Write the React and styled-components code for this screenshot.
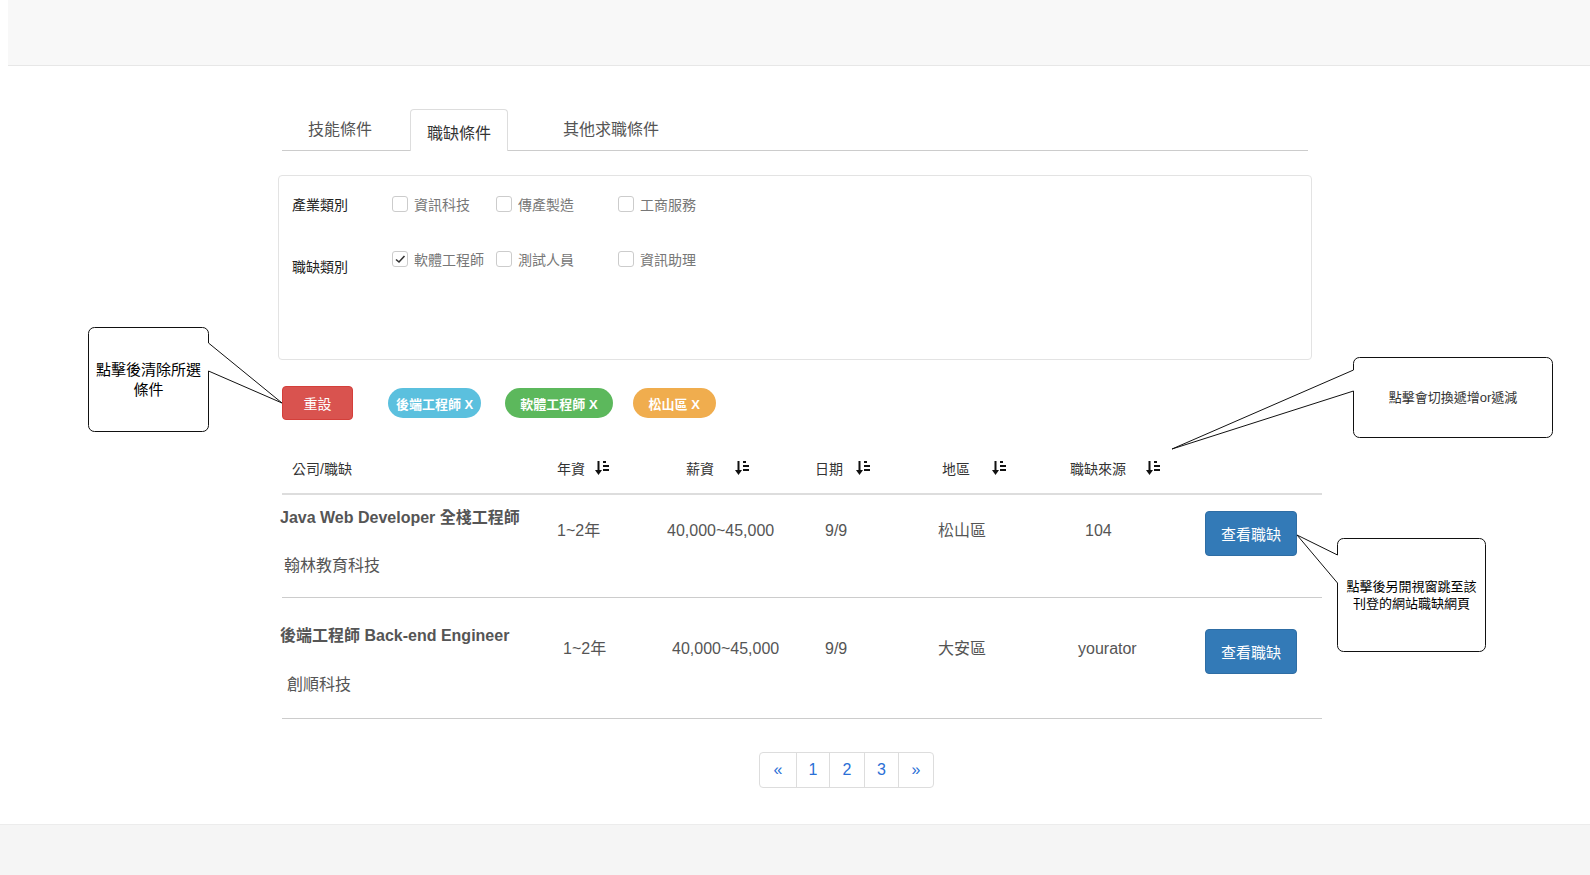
import React from "react";
import styled, { createGlobalStyle } from "styled-components";

const GlobalStyle = createGlobalStyle`
  html, body {
    margin: 0;
    padding: 0;
    background: #fff;
  }
  body {
    font-family: "Liberation Sans", "Noto Sans CJK TC", sans-serif;
    color: #333;
  }
  * {
    box-sizing: border-box;
  }
`;

const Page = styled.div`
  position: relative;
  min-height: 100vh;
  display: flex;
  flex-direction: column;
  overflow: hidden;
`;

const Navbar = styled.header`
  margin-left: 8px;
  height: 66px;
  background: #f8f8f8;
  border-bottom: 1px solid #e7e7e7;
`;

const Main = styled.main`
  padding: 43px 0 0 278px;
  width: 1330px;
`;

/* ---------- tabs ---------- */

const TabList = styled.div`
  display: flex;
  align-items: flex-end;
  margin-left: 4px;
  width: 1026px;
  height: 42px;
  border-bottom: 1px solid #ccc;
`;

const Tab = styled.div`
  width: ${(p) => p.$w}px;
  margin-left: ${(p) => p.$ml || 0}px;
  height: ${(p) => (p.$active ? 42 : 41)}px;
  margin-bottom: ${(p) => (p.$active ? -1 : 0)}px;
  display: flex;
  align-items: center;
  justify-content: center;
  font-size: 16px;
  color: ${(p) => (p.$active ? "#333" : "#555")};
  padding: ${(p) => (p.$active ? "2px 0 0" : "0 0 3px")};
  background: ${(p) => (p.$active ? "#fff" : "transparent")};
  border: ${(p) => (p.$active ? "1px solid #ddd" : "none")};
  border-bottom: none;
  border-radius: 4px 4px 0 0;
`;

/* ---------- filter panel ---------- */

const Panel = styled.section`
  margin-top: 24px;
  width: 1034px;
  height: 185px;
  border: 1px solid #e3e3e3;
  border-radius: 4px;
  padding: 18px 0 0 13px;
`;

const FilterRow = styled.div`
  display: flex;
  align-items: center;
  height: 20px;
  margin-top: ${(p) => p.$mt || 0}px;
`;

const FilterLabel = styled.div`
  width: 100px;
  font-size: 14px;
  color: #222;
  position: relative;
  top: ${(p) => p.$shift || 0}px;
`;

const Option = styled.label`
  display: flex;
  align-items: center;
  width: ${(p) => (p.$w ? `${p.$w}px` : "auto")};
  font-size: 14px;
  color: #777;
`;

const Box = styled.span`
  width: 16px;
  height: 16px;
  border: 1px solid #ccc;
  border-radius: 3px;
  margin-right: 6px;
  display: flex;
  align-items: center;
  justify-content: center;
  background: #fff;
`;

/* ---------- actions ---------- */

const ActionRow = styled.div`
  display: flex;
  align-items: center;
  margin: 26px 0 0 4px;
  height: 34px;
`;

const ResetButton = styled.button`
  width: 71px;
  height: 34px;
  background: #d9534f;
  border: 1px solid #d43f3a;
  border-radius: 4px;
  color: #fff;
  font-family: inherit;
  font-size: 14px;
  margin-right: 35px;
`;

const Tag = styled.span`
  height: 30px;
  padding: 0 ${(p) => p.$pad}px;
  margin-right: ${(p) => p.$mr || 0}px;
  border-radius: 15px;
  background: ${(p) => p.$bg};
  color: #fff;
  font-size: 13px;
  font-weight: bold;
  display: flex;
  align-items: center;
  white-space: nowrap;
`;

/* ---------- table ---------- */

const COLS = "275px 110px 148px 123px 132px 135px 117px";

const Table = styled.div`
  margin: 38px 0 0 4px;
  width: 1040px;
`;

const HeadRow = styled.div`
  display: grid;
  grid-template-columns: ${COLS};
  padding-bottom: 15px;
  border-bottom: 2px solid #ddd;
`;

const HeadCell = styled.div`
  display: flex;
  align-items: center;
  height: 20px;
  padding-left: ${(p) => p.$pl}px;
  font-size: 14px;
  color: #333;
  white-space: nowrap;
`;

const SortIcon = styled.svg`
  margin-left: ${(p) => p.$gap}px;
  flex: none;
`;

const Row = styled.div`
  display: grid;
  grid-template-columns: ${COLS};
  align-items: start;
  padding: ${(p) => p.$pt}px 0 ${(p) => p.$pb}px;
  border-bottom: 1px solid #ccc;
`;

const JobCell = styled.div`
  display: flex;
  flex-direction: column;
  margin-left: -2px;
`;

const JobTitle = styled.div`
  font-size: 16px;
  line-height: 20px;
  font-weight: bold;
  color: #555;
  white-space: nowrap;
`;

const Company = styled.div`
  font-size: 16px;
  line-height: 20px;
  color: #555;
  margin-top: ${(p) => p.$mt}px;
  padding-left: ${(p) => p.$pl}px;
`;

const DataCell = styled.div`
  font-size: 16px;
  line-height: 20px;
  color: #555;
  margin-top: 13px;
  padding-left: ${(p) => p.$pl}px;
  white-space: nowrap;
`;

const ViewButton = styled.button`
  width: 92px;
  height: 45px;
  margin-top: ${(p) => p.$mt}px;
  background: #337ab7;
  border: 1px solid #2e6da4;
  border-radius: 4px;
  color: #fff;
  font-family: inherit;
  font-size: 15px;
`;

/* ---------- pagination ---------- */

const Pager = styled.nav`
  display: flex;
  margin: 33px 0 0 481px;
  width: max-content;
  border: 1px solid #ddd;
  border-radius: 4px;
`;

const PageItem = styled.a`
  width: ${(p) => p.$w}px;
  height: 34px;
  display: flex;
  align-items: center;
  justify-content: center;
  font-size: 16px;
  color: #2a6fd6;
  border-left: ${(p) => (p.$first ? "none" : "1px solid #ddd")};
`;

const Footer = styled.footer`
  margin-top: 36px;
  flex: 1;
  min-height: 51px;
  background: #f5f5f5;
  border-top: 1px solid #ececec;
`;

/* ---------- annotation callouts ---------- */

const CalloutWrap = styled.div`
  position: absolute;
  left: ${(p) => p.$x}px;
  top: ${(p) => p.$y}px;
  width: ${(p) => p.$w}px;
  height: ${(p) => p.$h}px;
  display: flex;
  align-items: center;
  justify-content: center;
  text-align: center;
  z-index: 5;
`;

const CalloutShape = styled.svg`
  position: absolute;
  left: 0;
  top: 0;
  overflow: visible;
`;

const CalloutText = styled.div`
  position: relative;
  font-size: ${(p) => p.$fs}px;
  line-height: ${(p) => p.$lh}px;
  color: ${(p) => p.$color || "#000"};
  padding: 0 6px;
`;

function bubblePath(w, h, r, side, y1, y2, tx, ty) {
  const a = 0.5;
  const W = w - 0.5;
  const H = h - 0.5;
  if (side === "right") {
    return `M${a + r},${a} H${W - r} A${r},${r} 0 0 1 ${W},${a + r} V${y1} L${tx},${ty} L${W},${y2} V${H - r} A${r},${r} 0 0 1 ${W - r},${H} H${a + r} A${r},${r} 0 0 1 ${a},${H - r} V${a + r} A${r},${r} 0 0 1 ${a + r},${a} Z`;
  }
  return `M${a + r},${a} H${W - r} A${r},${r} 0 0 1 ${W},${a + r} V${H - r} A${r},${r} 0 0 1 ${W - r},${H} H${a + r} A${r},${r} 0 0 1 ${a},${H - r} V${y2} L${tx},${ty} L${a},${y1} V${a + r} A${r},${r} 0 0 1 ${a + r},${a} Z`;
}

const Callout = ({ x, y, w, h, side, y1, y2, tx, ty, fs, lh, color, children }) => (
  <CalloutWrap $x={x} $y={y} $w={w} $h={h}>
    <CalloutShape width={w} height={h}>
      <path
        d={bubblePath(w, h, 6, side, y1, y2, tx, ty)}
        fill="#fff"
        stroke="#111"
        strokeWidth="1"
      />
    </CalloutShape>
    <CalloutText $fs={fs} $lh={lh} $color={color}>
      {children}
    </CalloutText>
  </CalloutWrap>
);

/* ---------- data ---------- */

const checkMark = (
  <svg width="12" height="12" viewBox="0 0 12 12">
    <polyline points="2,6.5 5,9 10.5,3" fill="none" stroke="#333" strokeWidth="1.6" />
  </svg>
);

const Sort = ({ gap }) => (
  <SortIcon $gap={gap} width="14" height="16" viewBox="0 0 14 16">
    <rect x="2.5" y="1" width="2" height="10" fill="#111" />
    <polygon points="0,10 7,10 3.5,15" fill="#111" />
    <rect x="8" y="1" width="3" height="2" fill="#111" />
    <rect x="8" y="5" width="6" height="2" fill="#111" />
    <rect x="8" y="9" width="6" height="2" fill="#111" />
  </SortIcon>
);

const filters = [
  {
    label: "產業類別",
    shift: 0,
    options: [
      { text: "資訊科技", w: 104 },
      { text: "傳產製造", w: 122 },
      { text: "工商服務" },
    ],
  },
  {
    label: "職缺類別",
    shift: 7,
    options: [
      { text: "軟體工程師", w: 104, checked: true },
      { text: "測試人員", w: 122 },
      { text: "資訊助理" },
    ],
  },
];

const headers = [
  { label: "公司/職缺", pl: 10 },
  { label: "年資", pl: 0, gap: 10 },
  { label: "薪資", pl: 19, gap: 21 },
  { label: "日期", pl: 0, gap: 13 },
  { label: "地區", pl: 4, gap: 22 },
  { label: "職缺來源", pl: 0, gap: 20 },
];

const jobs = [
  {
    title: "Java Web Developer 全棧工程師",
    company: "翰林教育科技",
    companyPl: 4,
    values: [
      ["1~2年", 0],
      ["40,000~45,000", 0],
      ["9/9", 10],
      ["松山區", 0],
      ["104", 15],
    ],
    pt: 13,
    pb: 21,
    gap: 28,
    btn: 3,
  },
  {
    title: "後端工程師 Back-end Engineer",
    company: "創順科技",
    companyPl: 7,
    values: [
      ["1~2年", 6],
      ["40,000~45,000", 5],
      ["9/9", 10],
      ["大安區", 0],
      ["yourator", 8],
    ],
    pt: 28,
    pb: 23,
    gap: 29,
    btn: 3,
  },
];

const pages = [
  { t: "«", w: 36 },
  { t: "1", w: 33 },
  { t: "2", w: 35 },
  { t: "3", w: 34 },
  { t: "»", w: 35 },
];

export default function App() {
  return (
    <Page>
      <GlobalStyle />
      <Navbar />
      <Main>
        <TabList>
          <Tab $w={116}>技能條件</Tab>
          <Tab $w={98} $ml={12} $active>
            職缺條件
          </Tab>
          <Tab $w={206}>其他求職條件</Tab>
        </TabList>

        <Panel>
          {filters.map((f, i) => (
            <FilterRow key={f.label} $mt={i === 0 ? 0 : 35}>
              <FilterLabel $shift={f.shift}>{f.label}</FilterLabel>
              {f.options.map((o) => (
                <Option key={o.text} $w={o.w}>
                  <Box>{o.checked && checkMark}</Box>
                  {o.text}
                </Option>
              ))}
            </FilterRow>
          ))}
        </Panel>

        <ActionRow>
          <ResetButton>重設</ResetButton>
          <Tag $bg="#5bc0de" $pad={8} $mr={24}>
            後端工程師 X
          </Tag>
          <Tag $bg="#5cb85c" $pad={15} $mr={20}>
            軟體工程師 X
          </Tag>
          <Tag $bg="#f0ad4e" $pad={16}>
            松山區 X
          </Tag>
        </ActionRow>

        <Table>
          <HeadRow>
            {headers.map((h) => (
              <HeadCell key={h.label} $pl={h.pl}>
                {h.label}
                {h.gap && <Sort gap={h.gap} />}
              </HeadCell>
            ))}
          </HeadRow>
          {jobs.map((j) => (
            <Row key={j.title} $pt={j.pt} $pb={j.pb}>
              <JobCell>
                <JobTitle>{j.title}</JobTitle>
                <Company $mt={j.gap} $pl={j.companyPl}>
                  {j.company}
                </Company>
              </JobCell>
              {j.values.map(([v, pl], i) => (
                <DataCell key={i} $pl={pl}>
                  {v}
                </DataCell>
              ))}
              <ViewButton $mt={j.btn}>查看職缺</ViewButton>
            </Row>
          ))}
        </Table>

        <Pager>
          {pages.map((p, i) => (
            <PageItem key={p.t} $w={p.w} $first={i === 0}>
              {p.t}
            </PageItem>
          ))}
        </Pager>
      </Main>
      <Footer />

      <Callout x={88} y={327} w={121} h={105} side="right" y1={16} y2={44} tx={194} ty={76} fs={15} lh={20}>
        點擊後清除所選
        <br />
        條件
      </Callout>
      <Callout x={1353} y={357} w={200} h={81} side="left" y1={13} y2={34} tx={-181} ty={92} fs={13} lh={17} color="#333">
        點擊會切換遞增or遞減
      </Callout>
      <Callout x={1337} y={538} w={149} h={114} side="left" y1={17} y2={45} tx={-40} ty={-3} fs={13} lh={17}>
        點擊後另開視窗跳至該
        <br />
        刊登的網站職缺網頁
      </Callout>
    </Page>
  );
}
